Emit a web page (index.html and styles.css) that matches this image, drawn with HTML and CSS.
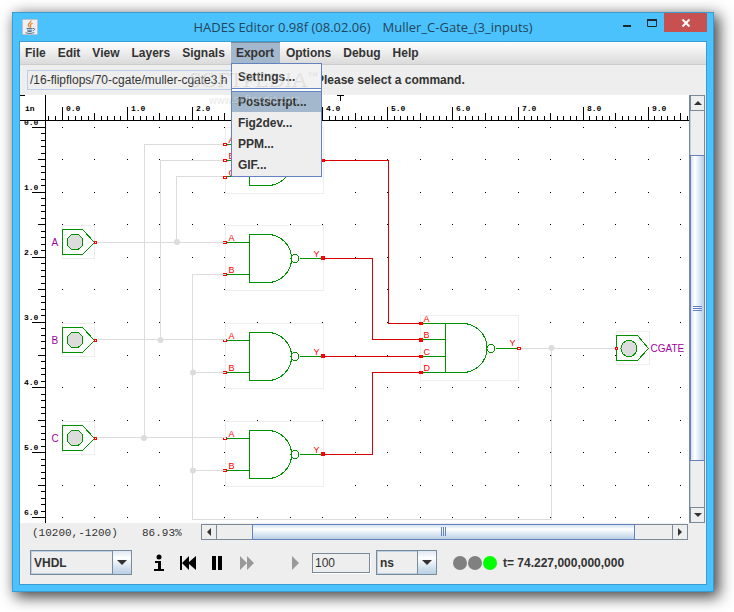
FILE: index.html
```html
<!DOCTYPE html>
<html lang="en">
<head>
<meta charset="utf-8">
<title>HADES Editor 0.98f (08.02.06) Muller_C-Gate_(3_inputs)</title>
<link rel="stylesheet" href="styles.css">
</head>
<body>
<div class="window">
  <header class="titlebar">
    <svg class="app-icon" width="16" height="16" viewBox="0 0 16 16" aria-hidden="true">
      <rect x="0.5" y="0.5" width="15" height="15" rx="1" fill="#eef0f2" stroke="#b9c2ca"/>
      <path d="M9 1.500C9.600 3.500 5.600 4.300 6.200 6.200C6.500 7.100 7.400 7.600 7.400 8.600M10.600 4.200C8.600 5 7.800 5.700 8.600 6.900C9 7.500 8.700 8.200 8.200 8.700" fill="none" stroke="#e8802c" stroke-width="1.200"/>
      <path d="M4.500 9.500H10.500M5 11.200H10.200M5.600 12.500H9.600M3.500 13.700C6 14.700 10 14.600 12.300 13.500M10.800 9.500C13.400 8.800 13.200 11.300 10.800 11.700" fill="none" stroke="#4f7396"/>
    </svg>
    <h1 class="title"><span>HADES Editor 0.98f (08.02.06)</span><span>Muller_C-Gate_(3_inputs)</span></h1>
    <div class="window-buttons">
      <button class="win-btn" aria-label="Minimize"><svg width="10" height="10" viewBox="0 0 10 10"><path d="M1 8H9" stroke="#20272d" stroke-width="2"/></svg></button>
      <button class="win-btn" aria-label="Maximize"><svg width="10" height="10" viewBox="0 0 10 10"><path d="M0.500 1V8.500H9.500V1" fill="none" stroke="#20272d"/><path d="M0 2H10" stroke="#20272d" stroke-width="2"/></svg></button>
      <button class="win-btn close" aria-label="Close"><svg width="10" height="10" viewBox="0 0 10 10"><path d="M1.500 1.500L8.500 8.500M8.500 1.500L1.500 8.500" stroke="#fff" stroke-width="2"/></svg></button>
    </div>
  </header>

  <main class="client">
    <nav class="menubar" aria-label="Main menu">
      <button class="menu">File</button>
      <button class="menu">Edit</button>
      <button class="menu">View</button>
      <button class="menu">Layers</button>
      <button class="menu">Signals</button>
      <div class="menu-holder">
        <button class="menu open" aria-expanded="true">Export</button>
        <div class="popup" role="menu">
          <button class="item first" role="menuitem">Settings...</button>
          <div class="separator" role="separator"></div>
          <button class="item selected" role="menuitem">Postscript...</button>
          <button class="item" role="menuitem">Fig2dev...</button>
          <button class="item" role="menuitem">PPM...</button>
          <button class="item" role="menuitem">GIF...</button>
        </div>
      </div>
      <button class="menu">Options</button>
      <button class="menu">Debug</button>
      <button class="menu">Help</button>
    </nav>

    <div class="command-row">
      <input class="path" type="text" aria-label="Design path" value="/16-flipflops/70-cgate/muller-cgate3.h">
      <span class="prompt">Please select a command.</span>
      <div class="watermark" aria-hidden="true"><span class="mark-name">SOFTPEDIA<sup>™</sup></span><span class="mark-url">www.softpedia.com</span></div>
    </div>

    <div class="workspace">
      <svg class="schematic" role="img" aria-label="Muller C-gate schematic">
        <defs>
          <g id="source">
            <rect class="box" x="62" y="225" width="32" height="33"/>
            <path class="gate" d="M62 229H82L94 242L82 254H62Z"/>
            <circle class="lamp" cx="74.500" cy="241.500" r="8"/>
            <rect class="port" x="94" y="241" width="2" height="2"/>
          </g>
          <g id="nand2">
            <rect class="box" x="225" y="225" width="98" height="65"/>
            <path class="gate" d="M225 242H249M225 274H249M249 234H267A24 24 0 0 1 267 282H249ZM299 258H323"/>
            <circle class="gate" cx="294.500" cy="258" r="4"/>
            <rect class="port" x="223" y="241" width="3" height="2"/>
            <rect class="port" x="223" y="273" width="3" height="2"/>
            <rect class="port full" x="321" y="256" width="3" height="3"/>
            <text class="pin" x="228" y="240">A</text>
            <text class="pin" x="228" y="272">B</text>
            <text class="pin" x="313" y="256">Y</text>
          </g>
        </defs>
        <g id="grid"></g>
        <g transform="translate(-19.500 -94.500)">
          <use href="#source"/>
          <use href="#source" y="98"/>
          <use href="#source" y="196"/>
          <use href="#nand2"/>
          <use href="#nand2" y="98"/>
          <use href="#nand2" y="196"/>

          <rect class="box" x="225" y="127" width="98" height="66"/>
          <rect class="box" x="420" y="315" width="98" height="65"/>
          <rect class="box" x="616" y="331" width="33" height="33"/>

          <path class="net" d="M97 242H225M176 242V176H225M97 339H225M160 339V160H225M97 437H225M144 437V144H225M225 274H192V519H551V348M192 372H225M192 470H225M518 348H616"/>
          <circle class="node" cx="176.500" cy="241.500" r="3"/>
          <circle class="node" cx="160" cy="339.500" r="3"/>
          <circle class="node" cx="143.500" cy="437.500" r="3"/>
          <circle class="node" cx="192.500" cy="372" r="3"/>
          <circle class="node" cx="192.500" cy="470" r="3"/>
          <circle class="node" cx="551" cy="347.500" r="3"/>
          <path class="net high" d="M323 160H388V323H420M323 258H372V339H420M323 356H420M323 454H372V372H420"/>

          <path class="gate" d="M225 144H249M225 160H249M225 176H249M249 136H267A24 24 0 0 1 267 185H249ZM299 160H323"/>
          <circle class="gate" cx="294.500" cy="160" r="4"/>
          <rect class="port" x="223" y="143" width="3" height="2"/>
          <rect class="port" x="223" y="159" width="3" height="2"/>
          <rect class="port" x="223" y="176" width="3" height="2"/>
          <rect class="port full" x="322" y="159" width="2" height="2"/>
          <text class="pin" x="228" y="142">A</text>
          <text class="pin" x="228" y="158">B</text>
          <text class="pin" x="228" y="175">C</text>

          <path class="gate" d="M420 323H445M420 339H445M420 356H445M420 372H445M445 323H462A24.500 24.500 0 0 1 462 372H445ZM495 348H518"/>
          <circle class="gate" cx="490.500" cy="348" r="4"/>
          <rect class="port full" x="419" y="322" width="3" height="2"/>
          <rect class="port full" x="419" y="338" width="3" height="3"/>
          <rect class="port full" x="419" y="355" width="3" height="2"/>
          <rect class="port full" x="419" y="371" width="3" height="2"/>
          <rect class="port" x="517" y="347" width="3" height="2"/>
          <text class="pin" x="423" y="321">A</text>
          <text class="pin" x="423" y="337">B</text>
          <text class="pin" x="423" y="354">C</text>
          <text class="pin" x="423" y="370">D</text>
          <text class="pin" x="509" y="345">Y</text>

          <path class="gate" d="M616 335H637L648 348L637 360H616Z"/>
          <circle class="lamp" cx="628.500" cy="348" r="8"/>
          <rect class="port" x="615" y="347" width="2" height="2"/>

          <text class="signal" x="51" y="245">A</text>
          <text class="signal" x="51" y="343">B</text>
          <text class="signal" x="51" y="441">C</text>
          <text class="signal" x="650" y="351">CGATE</text>
        </g>
        <g id="rulers"></g>
      </svg>
      <div class="vscroll">
        <button class="arrow" aria-label="Scroll up"><svg width="8" height="4" viewBox="0 0 8 4"><path d="M4 0L8 4H0Z"/></svg></button>
        <div class="track"><div class="thumb"><i></i><i></i><i></i></div></div>
        <button class="arrow" aria-label="Scroll down"><svg width="8" height="4" viewBox="0 0 8 4"><path d="M0 0H8L4 4Z"/></svg></button>
      </div>
    </div>

    <div class="status-row">
      <span class="coords">(10200,-1200)</span>
      <span class="zoom">86.93%</span>
      <div class="hscroll">
        <button class="arrow" aria-label="Scroll left"><svg width="4" height="8" viewBox="0 0 4 8"><path d="M4 0V8L0 4Z"/></svg></button>
        <div class="track"><div class="thumb"><i></i><i></i><i></i></div></div>
        <button class="arrow" aria-label="Scroll right"><svg width="4" height="8" viewBox="0 0 4 8"><path d="M0 0V8L4 4Z"/></svg></button>
      </div>
    </div>

    <div class="control-row">
      <div class="combo language">
        <select aria-label="Language"><option>VHDL</option></select>
        <span class="drop"><svg width="10" height="5" viewBox="0 0 10 5"><path d="M0 0H10L5 5Z"/></svg></span>
      </div>
      <div class="transport">
        <button aria-label="Info"><svg width="10" height="18" viewBox="0 0 10 18"><ellipse cx="5" cy="3" rx="2.500" ry="2.500"/><path d="M1 7H7V15H10V17H0V15H4V9H1Z"/></svg></button>
        <button aria-label="Rewind"><svg width="16" height="18" viewBox="0 0 16 18"><path d="M0 2H2V9L9 2V8L16 2V16L9 10V16L2 9V16H0Z"/></svg></button>
        <button aria-label="Pause"><svg width="10" height="18" viewBox="0 0 10 18"><path d="M0 2H4V16H0ZM6 2H10V16H6Z"/></svg></button>
        <button class="forward" aria-label="Fast forward" disabled><svg width="14" height="18" viewBox="0 0 14 18"><path d="M0 2L7 9V2L14 9L7 16V9L0 16Z"/></svg></button>
        <button class="step" aria-label="Run step" disabled><svg width="7" height="18" viewBox="0 0 7 18"><path d="M0 2L7 9L0 16Z"/></svg></button>
      </div>
      <input class="amount" type="text" aria-label="Step time" value="100">
      <div class="combo unit">
        <select aria-label="Time unit"><option>ns</option></select>
        <span class="drop"><svg width="10" height="5" viewBox="0 0 10 5"><path d="M0 0H10L5 5Z"/></svg></span>
      </div>
      <div class="lights"><i></i><i></i><i class="on"></i></div>
      <output class="time">t= 74.227,000,000,000</output>
    </div>
  </main>
</div>
<script src="schematic.js"></script>
</body>
</html>
```
FILE: styles.css
```css
* { box-sizing: border-box; }

body {
  margin: 0;
  min-height: 100vh;
  padding: 12px 20px 20px 12px;
  display: flex;
  background: #fff;
  font: bold 12px/16px "Liberation Sans", sans-serif;
  color: #333;
}

button, input, select { font: inherit; color: inherit; margin: 0; border-radius: 0; }
button { padding: 0; border: 0; background: none; }

.window {
  flex: 1;
  min-width: 0;
  display: flex;
  flex-direction: column;
  padding: 0 6px 6px;
  border: 1px solid #3a9cd0;
  background: #4bc2fc;
  box-shadow: 4px 4px 14px 1px rgba(0, 0, 0, .75);
}

.titlebar {
  position: relative;
  height: 28px;
  display: flex;
  align-items: flex-start;
  justify-content: space-between;
}
.app-icon { margin: 6px 0 0 3px; }
.title {
  position: absolute;
  inset: 0;
  margin: 0;
  display: flex;
  justify-content: center;
  gap: 12px;
  font: 13px/28px "Open Sans", sans-serif;
  color: #23455c;
  white-space: pre;
}
.window-buttons { position: relative; display: flex; }
.win-btn { width: 25px; height: 19px; display: grid; place-items: center; }
.close { width: 43px; background: #c75050; }

.client {
  flex: 1;
  min-height: 0;
  display: flex;
  flex-direction: column;
  border: 1px solid #3a9cd0;
  background: #eee;
}

.menubar {
  height: 23px;
  display: flex;
  border-bottom: 1px solid #ccc;
  background: linear-gradient(#fff, #dadada);
}
.menu-holder { position: relative; z-index: 2; }
.menu { height: 21px; padding: 0 6px; }
.menu:first-child { padding-left: 5px; }
.open { background: #a3b8cc; border-top: 1px solid #7a8a99; }
.popup {
  position: absolute;
  top: 21px;
  left: 0;
  width: 91px;
  display: flex;
  flex-direction: column;
  padding-bottom: 1px;
  border: 1px solid #6382bf;
  background: #eee;
}
.item { height: 21px; padding: 0 6px; text-align: left; }
.first { height: 24px; padding-top: 2px; background: #f2f2f2; }
.separator { height: 3px; border-top: 1px solid #6382bf; background: #fff; }
.selected { background: #a3b8cc; border-top: 1px solid #6382bf; }

.command-row { position: relative; height: 30px; display: flex; align-items: center; padding-left: 7px; }
.path {
  width: 282px;
  height: 20px;
  padding: 0 2px;
  border: 1px solid #b8cfe5;
  background: #eee;
  font-weight: normal;
}
.prompt { margin-left: 7px; }
.watermark {
  position: absolute;
  z-index: 3;
  top: 0;
  left: 168px;
  display: flex;
  flex-direction: column;
  pointer-events: none;
  color: rgba(255, 255, 255, .4);
  text-shadow: 1px 1px 1px rgba(0, 0, 0, .12);
}
.mark-name { font: 22px/28px "Liberation Serif", serif; }
.mark-name sup { font-size: 10px; line-height: 0; }
.mark-url { padding-left: 20px; font: 10px/12px "Open Sans", sans-serif; }

.workspace { flex: 1; min-height: 0; display: flex; }
.schematic { flex: 1; min-width: 0; height: 100%; background: #fff; shape-rendering: crispEdges; }
.box { fill: #fff; stroke: #eee; }
.gate { fill: none; stroke: #009000; }
.lamp { fill: #dcdcdc; stroke: #009000; }
.port { fill: #fff; stroke: #f00; }
.full { fill: #f00; }
.net { fill: none; stroke: #dcdcdc; }
.high { stroke: #d80000; }
.node { fill: #dcdcdc; shape-rendering: auto; }
.pin { font: 9px "Liberation Sans", sans-serif; fill: #f00; }
.signal { font: 10px "Liberation Sans", sans-serif; fill: #a000a0; }
.ruler-line { fill: none; stroke: #000; }
.ruler-bg { fill: #fff; }
.ruler-label { font: bold 8px "Liberation Mono", monospace; fill: #000; }

.arrow { flex: none; display: grid; place-items: center; border: 1px solid #7a8a99; background: #eee; fill: #333; }
.track { flex: 1; display: flex; min-width: 0; min-height: 0; }
.thumb { flex: 1; display: flex; align-items: center; justify-content: center; gap: 1px; border: 1px solid #6382bf; }
.thumb i { background: #6382bf; }

.vscroll { width: 17px; display: flex; flex-direction: column; border-left: 1px solid #7a8a99; }
.vscroll .arrow { width: 15px; height: 16px; }
.vscroll .track { width: 15px; flex-direction: column; padding: 44px 0 46px; border-left: 1px solid #b8cfe5; border-right: 1px solid #7a8a99; }
.vscroll .thumb { flex-direction: column; margin: 0 -1px; background: linear-gradient(90deg, #d4e2ef, #fff 30%, #b8cfe5); }
.vscroll .thumb i { width: 9px; height: 1px; }

.status-row {
  height: 18px;
  display: flex;
  align-items: center;
  padding-left: 12px;
  padding-right: 18px;
  font: 11px/16px "Liberation Mono", monospace;
}
.coords { width: 110px; padding-top: 2px; }
.zoom { width: 59px; padding-top: 2px; }
.hscroll { flex: 1; height: 17px; display: flex; }
.hscroll .arrow { width: 16px; height: 16px; }
.hscroll .track { height: 16px; padding: 0 37px 0 35px; border-top: 1px solid #7a8a99; border-bottom: 1px solid #7a8a99; }
.hscroll .thumb { margin: -1px 0; background: linear-gradient(#d4e2ef, #fff 30%, #b8cfe5); }
.hscroll .thumb i { width: 1px; height: 9px; }

.control-row { height: 43px; display: flex; align-items: center; padding: 0 10px; }
.combo { position: relative; height: 25px; border: 1px solid #7a8a99; }
.combo select {
  width: 100%;
  height: 100%;
  padding: 0 22px 0 2px;
  border: 1px solid #b8cfe5;
  background: #eee;
  appearance: none;
}
.drop {
  position: absolute;
  inset: 0 0 0 auto;
  width: 19px;
  display: grid;
  place-items: center;
  border-left: 1px solid #7a8a99;
  background: linear-gradient(#dde8f3, #fff 30%, #b8cfe5);
  pointer-events: none;
  fill: #333;
}
.language { width: 102px; }
.unit { width: 61px; margin-left: 6px; }
.transport { display: flex; gap: 16px; margin-left: 22px; }
.transport button { display: flex; fill: #000; }
.transport button:disabled { fill: #999; }
.transport .forward { margin-left: 2px; }
.transport .step { margin-left: 22px; }
.amount {
  width: 58px;
  height: 20px;
  margin-left: 13px;
  padding: 0 2px;
  border: 1px solid #7a8a99;
  background: #eee;
  font-weight: normal;
  box-shadow: 1px 1px #fff;
}
.lights { display: flex; gap: 1px; margin-left: 16px; }
.lights i { width: 14px; height: 14px; border-radius: 50%; background: #808080; }
.lights .on { background: #0f0; }
.time { margin-left: 6px; white-space: nowrap; }
```
FILE: schematic.js
```js
// Draws the half-inch dot grid and the inch rulers of the schematic view.
const NS = "http://www.w3.org/2000/svg";
const INCH = 65.15;
const ORIGIN = { x: 42, y: 32 };
const view = document.querySelector(".schematic");
const size = view.getBoundingClientRect();

function add(parent, name, attrs, text) {
  const el = document.createElementNS(NS, name);
  for (const key in attrs) el.setAttribute(key, attrs[key]);
  if (text) el.textContent = text;
  parent.appendChild(el);
}

const grid = document.getElementById("grid");
let dots = "";
for (let y = ORIGIN.y; y < size.height; y += INCH / 2) {
  for (let x = ORIGIN.x; x < size.width; x += INCH / 2) {
    dots += `M${Math.floor(x)} ${Math.floor(y)}h1v1h-1z`;
  }
}
add(grid, "path", { d: dots });

const rulers = document.getElementById("rulers");
const tickLength = i => (i % 10 === 0 ? 13 : i % 5 === 0 ? 7 : 4);
let ticks = `M0 25.5H${size.width}M25.5 0V${size.height}M0 .5H5M317 .5H324M320.5 0V6`;
for (let i = 0; ORIGIN.y + i * INCH / 10 < size.height; i++) {
  const y = Math.floor(ORIGIN.y + i * INCH / 10) + 0.5;
  ticks += `M25 ${y}h${-tickLength(i)}`;
  if (i % 10 === 0) {
    add(rulers, "text", { class: "ruler-label", x: 4, y: y - 2.5 }, (i / 10).toFixed(1));
  }
}
add(rulers, "rect", { class: "ruler-bg", x: 0, y: 0, width: size.width, height: 25 });
for (let i = -2; ORIGIN.x + i * INCH / 10 < size.width; i++) {
  const x = Math.floor(ORIGIN.x + i * INCH / 10) + 0.5;
  ticks += `M${x} 25v${-tickLength(i)}`;
  if (i >= 0 && i % 10 === 0) {
    add(rulers, "text", { class: "ruler-label", x: x + 3.5, y: 16 }, (i / 10).toFixed(1));
  }
}
add(rulers, "path", { class: "ruler-line", d: ticks });
add(rulers, "text", { class: "ruler-label", x: 5, y: 16 }, "in");
```
